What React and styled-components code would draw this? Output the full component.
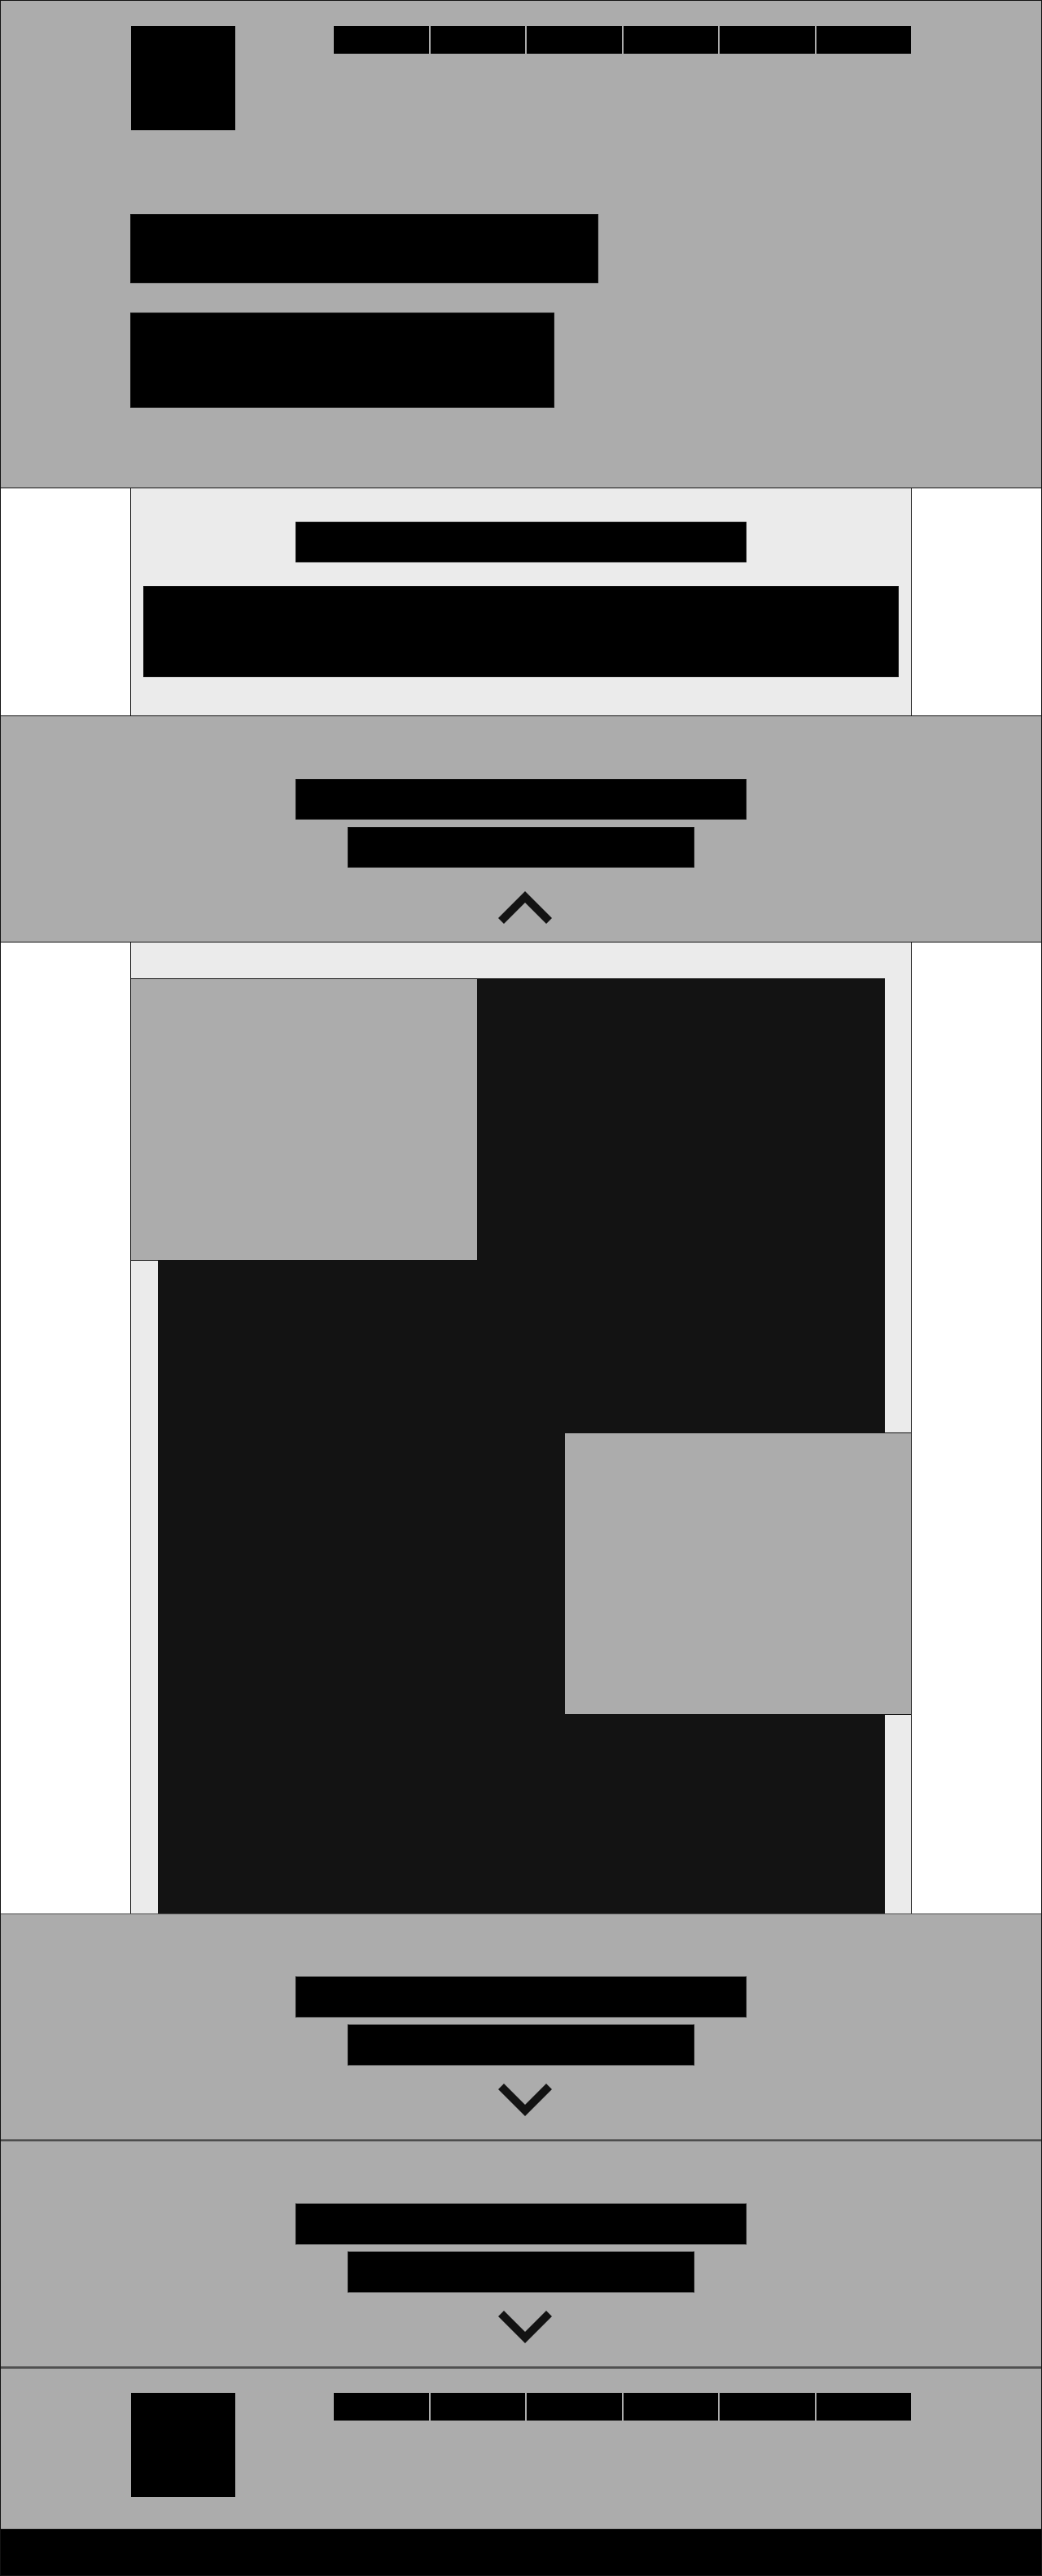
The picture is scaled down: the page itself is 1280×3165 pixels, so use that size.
import React, { useState } from "react";
import styled, { createGlobalStyle } from "styled-components";

const INK = "#131313";
const GREY = "#acacac";
const LIGHT = "#ebebeb";

const GlobalStyle = createGlobalStyle`
  *, *::before, *::after { box-sizing: border-box; }
  body { margin: 0; background: #fff; font-family: "Liberation Sans", sans-serif; }
`;

const Page = styled.div`
  border: 1px solid ${INK};
  background: #fff;
`;

const Container = styled.div`
  width: 100%;
  max-width: 960px;
  margin: 0 auto;
`;

const Header = styled.header`
  background: ${GREY};
  border-bottom: 1px solid ${INK};
  padding: 31px 0 98px;
`;

const TopRow = styled.div`
  display: flex;
  justify-content: space-between;
  align-items: flex-start;
  padding: 0 1px;
`;

const Logo = styled.a`
  display: block;
  width: 128px;
  height: 128px;
  background: #000;
`;

const Nav = styled.nav`
  display: grid;
  grid-template-columns: repeat(6, 1fr);
  gap: 2px;
  width: 74%;
`;

const NavLink = styled.a`
  height: 34px;
  background: #000;
`;

const HeroCopy = styled.div`
  display: flex;
  flex-direction: column;
  gap: 36px;
  margin-top: 103px;
`;

const Block = styled.div`
  width: ${(p) => p.$width};
  max-width: 100%;
  height: ${(p) => p.$height}px;
  background: #000;
  border: 1px solid ${INK};
`;

const Column = styled(Container)`
  background: ${LIGHT};
  border: solid ${INK};
  border-width: 0 1px;
`;

const Intro = styled(Column)`
  display: flex;
  flex-direction: column;
  align-items: center;
  gap: 29px;
  padding: 41px 15px 47px;
`;

const Band = styled.button`
  display: flex;
  flex-direction: column;
  align-items: center;
  width: 100%;
  margin: 0;
  padding: ${(p) => (p.$open ? "77px 0 22px" : "76px 0 28px")};
  border: 0 solid;
  border-width: ${(p) => p.$rules};
  border-color: ${(p) => (p.$open ? INK : "#4d4d4d transparent #6e6e6e")};
  background: ${GREY};
  cursor: pointer;
`;

const BandBars = styled.span`
  display: flex;
  flex-direction: column;
  align-items: center;
  gap: ${(p) => (p.$open ? 9 : 8)}px;
  width: 100%;
`;

const BandBar = styled.span`
  width: ${(p) => p.$width}px;
  max-width: 100%;
  height: ${(p) => (p.$open ? 50 : 51)}px;
  background: #000;
  border: 1px solid ${INK};
  border-color: ${(p) => (p.$open ? INK : `#5a5a5a ${INK}`)};
`;

const Chevron = styled.svg`
  display: block;
  width: 76px;
  height: 40px;
  margin-top: ${(p) => (p.$open ? 29 : 22)}px;
  fill: ${INK};
`;

const Panel = styled(Column)`
  padding: 44px 32px 0 33px;
`;

const Stage = styled.div`
  display: flex;
  flex-direction: column;
  gap: 211px;
  padding-bottom: 244px;
  background: ${INK};
`;

const Feature = styled.div`
  width: 427px;
  height: 347px;
  background: ${GREY};
  border: 1px solid ${INK};
  align-self: ${(p) => (p.$side === "left" ? "flex-start" : "flex-end")};
  margin: ${(p) => (p.$side === "left" ? "0 0 0 -34px" : "0 -33px 0 0")};
`;

const Footer = styled.footer`
  background: ${GREY};
  border-top: 1px solid ${INK};
  padding-top: 30px;
`;

const BottomBar = styled.div`
  height: 57px;
  margin-top: 39px;
  background: #000;
  border-top: 1px solid ${INK};
`;

const links = ["one", "two", "three", "four", "five", "six"];

const bands = [
  { id: "first", rules: "1px 0" },
  { id: "second", rules: "1px 0" },
  { id: "third", rules: "2px 0" },
];

function SiteBar({ label }) {
  return (
    <TopRow>
      <Logo href="#" aria-label="Home" />
      <Nav aria-label={label}>
        {links.map((name) => (
          <NavLink key={name} href={`#${name}`} aria-label={`Link ${name}`} />
        ))}
      </Nav>
    </TopRow>
  );
}

function Section({ id, rules, open, onToggle }) {
  return (
    <section>
      <Band
        type="button"
        aria-label={`Toggle ${id} section`}
        aria-expanded={open}
        onClick={onToggle}
        $open={open}
        $rules={rules}
      >
        <BandBars $open={open}>
          <BandBar $width={554} $open={open} />
          <BandBar $width={426} $open={open} />
        </BandBars>
        <Chevron viewBox="0 0 76 40" $open={open} aria-hidden="true">
          <polygon
            points={
              open
                ? "43,0 76,33 69,40 43,14 17,40 10,33"
                : "43,40 76,7 69,0 43,26 17,0 10,7"
            }
          />
        </Chevron>
      </Band>
      {open && (
        <Panel>
          <Stage>
            <Feature $side="left" />
            <Feature $side="right" />
          </Stage>
        </Panel>
      )}
    </section>
  );
}

export default function App() {
  const [openId, setOpenId] = useState("first");

  return (
    <>
      <GlobalStyle />
      <Page>
        <Header>
          <Container>
            <SiteBar label="Main" />
            <HeroCopy>
              <Block $width="575px" $height={85} />
              <Block $width="521px" $height={117} />
            </HeroCopy>
          </Container>
        </Header>
        <main>
          <Intro>
            <Block $width="554px" $height={50} />
            <Block $width="100%" $height={112} />
          </Intro>
          {bands.map((band) => (
            <Section
              key={band.id}
              id={band.id}
              rules={band.rules}
              open={openId === band.id}
              onToggle={() => setOpenId(openId === band.id ? null : band.id)}
            />
          ))}
        </main>
        <Footer>
          <Container>
            <SiteBar label="Footer" />
          </Container>
          <BottomBar />
        </Footer>
      </Page>
    </>
  );
}
